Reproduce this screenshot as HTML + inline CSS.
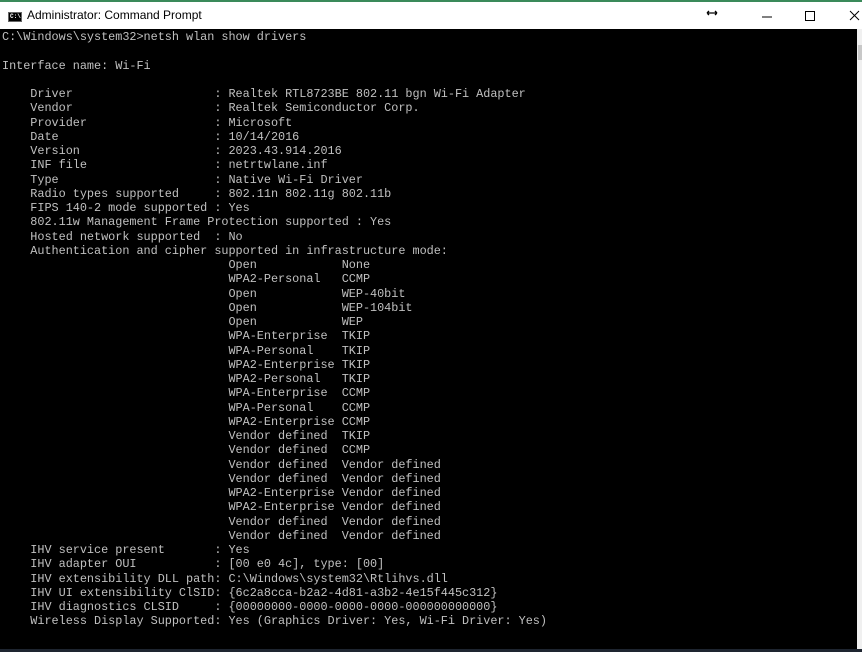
<!DOCTYPE html>
<html><head><style>
html,body{margin:0;padding:0;width:862px;height:652px;overflow:hidden;background:#000;}
#tb{position:absolute;left:0;top:0;width:862px;height:29px;background:#fff;border-top:2px solid #3a8a5a;box-sizing:border-box;}
#tb .t{position:absolute;left:27px;top:6px;font:12px "Liberation Sans",sans-serif;color:#000;}
#tb .ic{position:absolute;left:8px;top:10px;width:14px;height:10px;background:#000;border:1px solid #666;box-sizing:border-box;}
#tb .ic span{position:absolute;left:1px;top:0;font:bold 6px "Liberation Mono",monospace;color:#fff;line-height:8px;}
#con{position:absolute;left:0;top:29px;width:857px;height:620px;background:#000;}
pre{margin:0;position:absolute;left:2px;top:1px;font:11.85px/14.25px "Liberation Mono",monospace;color:#c0c0c0;letter-spacing:-0.03px;}
#sb{position:absolute;left:857px;top:29px;width:5px;height:620px;background:#f0f0f0;}
#thumb{position:absolute;left:858px;top:45px;width:4px;height:15px;background:#c8c8c8;}
#bot{position:absolute;left:0;top:649px;width:862px;height:3px;background:#1e2530;}
</style></head><body>
<div id="tb"><div class="ic"><span>C:\</span></div><div class="t">Administrator: Command Prompt</div>
<svg style="position:absolute;left:700px;top:4px" width="162" height="22">
<path d="M7 7h10M7 7l2-2M7 7l2 2M17 7l-2-2M17 7l-2 2" stroke="#000" stroke-width="1.3" fill="none"/>
<path d="M62 11h10" stroke="#000" stroke-width="1"/>
<rect x="105.5" y="5.5" width="9" height="9" stroke="#000" fill="none"/>
<path d="M150 5l9 9M159 5l-9 9" stroke="#000" stroke-width="1"/>
</svg></div>
<div id="con"><pre>C:\Windows\system32&gt;netsh wlan show drivers

Interface name: Wi-Fi

    Driver                    : Realtek RTL8723BE 802.11 bgn Wi-Fi Adapter
    Vendor                    : Realtek Semiconductor Corp.
    Provider                  : Microsoft
    Date                      : 10/14/2016
    Version                   : 2023.43.914.2016
    INF file                  : netrtwlane.inf
    Type                      : Native Wi-Fi Driver
    Radio types supported     : 802.11n 802.11g 802.11b
    FIPS 140-2 mode supported : Yes
    802.11w Management Frame Protection supported : Yes
    Hosted network supported  : No
    Authentication and cipher supported in infrastructure mode:
                                Open            None
                                WPA2-Personal   CCMP
                                Open            WEP-40bit
                                Open            WEP-104bit
                                Open            WEP
                                WPA-Enterprise  TKIP
                                WPA-Personal    TKIP
                                WPA2-Enterprise TKIP
                                WPA2-Personal   TKIP
                                WPA-Enterprise  CCMP
                                WPA-Personal    CCMP
                                WPA2-Enterprise CCMP
                                Vendor defined  TKIP
                                Vendor defined  CCMP
                                Vendor defined  Vendor defined
                                Vendor defined  Vendor defined
                                WPA2-Enterprise Vendor defined
                                WPA2-Enterprise Vendor defined
                                Vendor defined  Vendor defined
                                Vendor defined  Vendor defined
    IHV service present       : Yes
    IHV adapter OUI           : [00 e0 4c], type: [00]
    IHV extensibility DLL path: C:\Windows\system32\Rtlihvs.dll
    IHV UI extensibility ClSID: {6c2a8cca-b2a2-4d81-a3b2-4e15f445c312}
    IHV diagnostics CLSID     : {00000000-0000-0000-0000-000000000000}
    Wireless Display Supported: Yes (Graphics Driver: Yes, Wi-Fi Driver: Yes)</pre></div>
<div id="sb"></div><div id="thumb"></div><div id="bot"></div>
</body></html>
